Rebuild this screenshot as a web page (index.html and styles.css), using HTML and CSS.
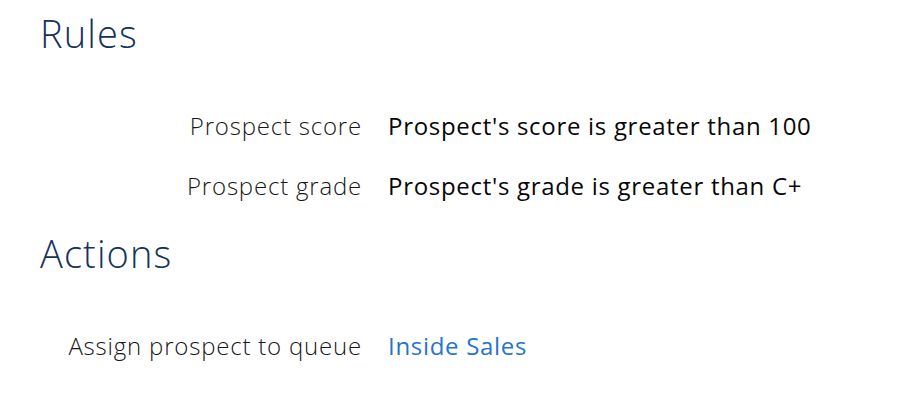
FILE: index.html
```html
<!DOCTYPE html>
<html lang="en">
<head>
  <meta charset="UTF-8" />
  <title>Automation Rule</title>
  <link rel="stylesheet" href="styles.css">
</head>
<body>
  <div class="page">
    <section class="section">
      <h2>Rules</h2>
      <div class="fields">
        <div class="label">Prospect score</div>
        <div class="value">Prospect's score is greater than 100</div>
        <div class="label">Prospect grade</div>
        <div class="value">Prospect's grade is greater than C+</div>
      </div>
    </section>

    <section class="section">
      <h2>Actions</h2>
      <div class="fields">
        <div class="label">Assign prospect to queue</div>
        <div class="value"><a href="#">Inside Sales</a></div>
      </div>
    </section>
  </div>
</body>
</html>
```

FILE: styles.css
```css
body {
  margin: 0;
  font-family: "Open Sans", Arial, sans-serif;
  background: #fff;
  color: #080707;
}
.page {
  padding: 9px 40px 0 40px;
}
.section {
  margin-bottom: 13px;
}
h2 {
  margin: 0 0 39px 0;
  font-size: 38px;
  line-height: 48px;
  font-weight: 300;
  letter-spacing: 1.1px;
  color: #16325c;
}
.fields {
  display: grid;
  grid-template-columns: 322px auto;
  column-gap: 26px;
  font-size: 24px;
  line-height: 60px;
  letter-spacing: 0.8px;
}
.label {
  text-align: right;
  font-weight: 300;
  color: #181818;
}
.value {
  font-weight: 500;
  letter-spacing: 0.7px;
}
.value a {
  color: #2574d0;
  text-decoration: none;
}
```
